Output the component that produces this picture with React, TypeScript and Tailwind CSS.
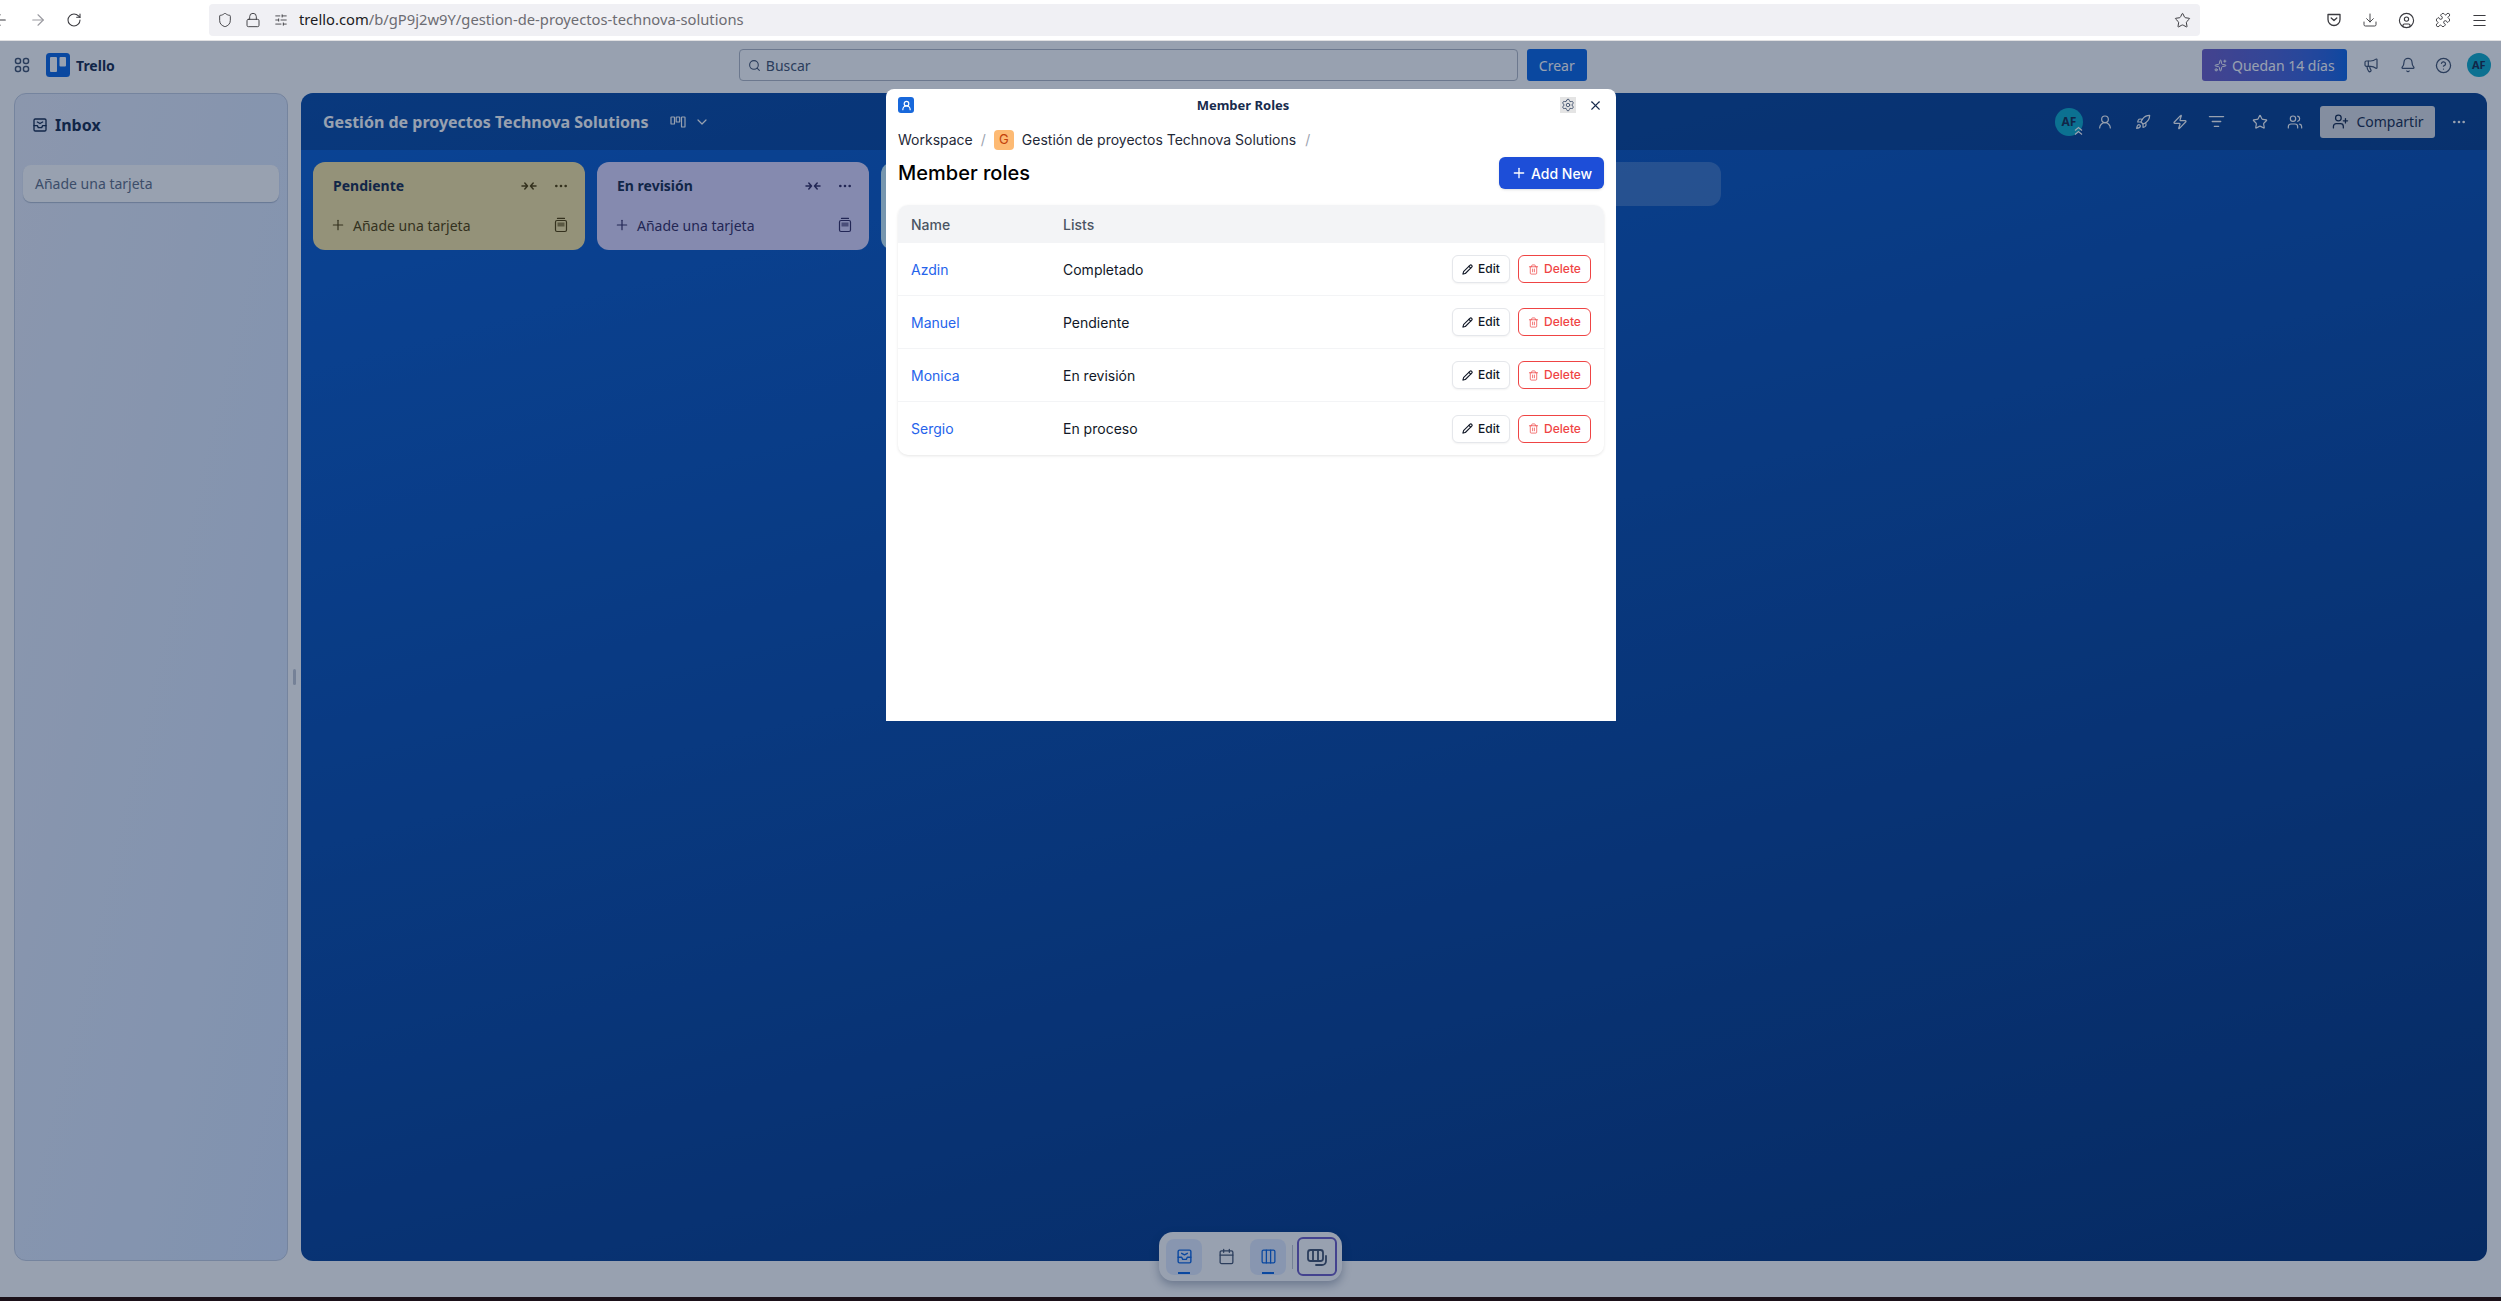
import React from 'react';
import {
  ArrowLeft, ArrowRight, RotateCw, Shield, Lock, SlidersHorizontal, Star, Download, CircleUser, Puzzle, Menu,
  Search, Sparkles, Megaphone, Bell, CircleHelp, UserRound, Rocket, Zap, ListFilter, Users, UserPlus, Ellipsis,
  Plus, Pencil, Trash2, Settings, X, Calendar, Columns3, ChevronDown,
} from 'lucide-react';

const AppsIcon = () => (
  <svg width="16" height="16" viewBox="0 0 16 16" fill="none" stroke="currentColor" strokeWidth="1.5">
    <rect x="1.5" y="1.5" width="5" height="5" rx="2" />
    <rect x="9.5" y="1.5" width="5" height="5" rx="2" />
    <rect x="1.5" y="9.5" width="5" height="5" rx="2" />
    <rect x="9.5" y="9.5" width="5" height="5" rx="2" />
  </svg>
);

const TrelloLogo = () => (
  <svg width="24" height="24" viewBox="0 0 24 24">
    <rect width="24" height="24" rx="3.5" fill="#0c66e4" />
    <rect x="4" y="4" width="7" height="15" rx="1" fill="#ffffff" />
    <rect x="13.5" y="4" width="6.5" height="9.5" rx="1" fill="#ffffff" />
  </svg>
);

const PocketIcon = () => (
  <svg width="16" height="16" viewBox="0 0 16 16" fill="none" stroke="currentColor" strokeWidth="1.3">
    <path d="M2 2.5h12v5a6 6 0 0 1-12 0z" strokeLinejoin="round" />
    <path d="M5.2 6 8 8.6 10.8 6" strokeLinecap="round" strokeLinejoin="round" />
  </svg>
);

const TrayIcon = ({ size }: { size: number }) => (
  <svg width={size} height={size} viewBox="0 0 24 24" fill="none" stroke="currentColor" strokeWidth="2" strokeLinejoin="round" strokeLinecap="round">
    <rect x="3" y="3" width="18" height="18" rx="2" />
    <path d="M3 13h5l1.5 3h5l1.5-3h5M8 7.5l4 2.2 4-2.2" />
  </svg>
);

const CollapseIcon = () => (
  <svg width="16" height="16" viewBox="0 0 16 16" fill="none" stroke="currentColor" strokeWidth="1.5" strokeLinecap="round" strokeLinejoin="round">
    <path d="M1 8h4.5M3.8 5l2.7 3-2.7 3M15 8h-4.5M12.2 5 9.5 8l2.7 3" />
  </svg>
);

const TemplateIcon = () => (
  <svg width="16" height="16" viewBox="0 0 16 16" fill="none" stroke="currentColor" strokeWidth="1.2">
    <rect x="2.5" y="3.5" width="11" height="11" rx="1.5" />
    <path d="M4.5 1.4h7" strokeLinecap="round" />
    <rect x="4.5" y="5.5" width="7" height="4" fill="currentColor" fillOpacity="0.6" stroke="none" />
  </svg>
);

const BoardViewIcon = () => (
  <svg width="16" height="16" viewBox="0 0 16 16" fill="none" stroke="currentColor" strokeWidth="1.2">
    <rect x="1" y="3" width="3.5" height="7" rx="0.6" />
    <rect x="6.2" y="3" width="3.5" height="5" rx="0.6" />
    <rect x="11.5" y="3" width="3.5" height="10" rx="0.6" />
  </svg>
);

const SwitchIcon = () => (
  <svg width="24" height="24" viewBox="0 0 24 24" fill="none" stroke="currentColor" strokeWidth="1.8" strokeLinecap="round">
    <rect x="3" y="5" width="15" height="11" rx="2.5" />
    <path d="M8 5v11M13 5v11M21 11v5a4 4 0 0 1-4 4h-6" />
  </svg>
);

const lists = [
  { name: 'Pendiente', bg: 'bg-[#f8e6a0]', fg: 'text-[#533f04]' },
  { name: 'En revisión', bg: 'bg-[#dfd8fd]', fg: 'text-[#352c63]' },
];

const roles = [
  { name: 'Azdin', list: 'Completado' },
  { name: 'Manuel', list: 'Pendiente' },
  { name: 'Monica', list: 'En revisión' },
  { name: 'Sergio', list: 'En proceso' },
];

const BrowserBar = () => (
  <div className="flex h-[41px] shrink-0 items-center border-b border-[#e0e0e2] bg-white text-[#3b3b40]">
    <div className="flex w-[209px] shrink-0 items-center">
      <ArrowLeft size={18} strokeWidth={1.5} className="ml-[-9px]" />
      <ArrowRight size={18} strokeWidth={1.5} className="ml-[20px] text-[#9a9aa0]" />
      <RotateCw size={16} strokeWidth={1.6} className="ml-[19px]" />
    </div>
    <div className="flex h-[32px] w-[1991px] shrink-0 items-center rounded-[4px] bg-[#f0f0f4] pl-[8px] pr-[9px]">
      <Shield size={16} strokeWidth={1.4} />
      <Lock size={16} strokeWidth={1.4} className="ml-[12px]" />
      <SlidersHorizontal size={14} strokeWidth={1.5} className="ml-[13px]" />
      <span className="ml-[11px] pb-[2px] text-[14.75px] leading-[20px] text-[#6c6c72]">
        <span className="text-[#1c1b22]">trello.com</span>/b/gP9j2w9Y/gestion-de-proyectos-technova-solutions
      </span>
      <Star size={17} strokeWidth={1.4} className="ml-auto" />
    </div>
    <div className="ml-[126px] flex items-center gap-[20px]">
      <PocketIcon />
      <Download size={16} strokeWidth={1.4} />
      <CircleUser size={17} strokeWidth={1.6} />
      <Puzzle size={16} strokeWidth={1.4} />
      <Menu size={17} strokeWidth={1.5} />
    </div>
  </div>
);

const TopBar = () => (
  <div className="flex h-[48px] shrink-0 items-center bg-white text-[#44546f]">
    <div className="ml-[14px] flex w-[16px] justify-center"><AppsIcon /></div>
    <div className="ml-[16px]"><TrelloLogo /></div>
    <span className="ml-[6px] text-[14px] font-bold text-[#172b4d]">Trello</span>
    <div className="ml-[624px] flex h-[32px] w-[779px] items-center rounded-[4px] border border-[#b3b9c4] pl-[8px] text-[14px] text-[#44546f]">
      <Search size={13} strokeWidth={2} />
      <span className="ml-[5px]">Buscar</span>
    </div>
    <div className="ml-[9px] flex h-[32px] w-[60px] items-center justify-center rounded-[3px] bg-[#0c66e4] text-[14px] text-white">Crear</div>
    <div className="ml-[615px] flex h-[32px] w-[145px] items-center justify-center gap-[5px] rounded-[3px] bg-gradient-to-r from-[#6e5dc6] to-[#0c66e4] text-[14px] text-white">
      <Sparkles size={13} strokeWidth={1.8} />
      <span>Quedan 14 días</span>
    </div>
    <Megaphone size={16} strokeWidth={1.8} className="ml-[16px]" />
    <Bell size={16} strokeWidth={1.8} className="ml-[21px]" />
    <CircleHelp size={17} strokeWidth={1.8} className="ml-[19px]" />
    <div className="ml-[15px] flex size-[24px] items-center justify-center rounded-full bg-[#0fadca] text-[11px] font-bold text-[#172b4d]">AF</div>
  </div>
);

const ListCard = ({ name, bg, fg }: { name: string; bg: string; fg: string }) => (
  <div className={`h-[88px] w-[272px] shrink-0 rounded-[12px] ${bg}`}>
    <div className="flex h-[47px] items-center pl-[20px] pr-[16px]">
      <span className="text-[14px] font-bold text-[#172b4d]">{name}</span>
      <span className={`ml-auto ${fg}`}><CollapseIcon /></span>
      <Ellipsis size={16} className={`ml-[16px] ${fg}`} />
    </div>
    <div className={`flex h-[32px] items-center pl-[17px] pr-[16px] text-[14px] ${fg}`}>
      <Plus size={16} strokeWidth={1.8} />
      <span className="ml-[7px]">Añade una tarjeta</span>
      <span className="ml-auto"><TemplateIcon /></span>
    </div>
  </div>
);

const Sidebar = () => (
  <div className="h-full w-[274px] shrink-0 rounded-[12px] border border-[#c3cde0] bg-gradient-to-br from-[#e9eefa] to-[#d7e6ff] px-[8px]">
    <div className="mb-[9px] flex h-[62px] items-center pl-[9px] text-[#172b4d]">
      <TrayIcon size={16} />
      <span className="ml-[7px] text-[16px] font-bold">Inbox</span>
    </div>
    <div className="flex h-[37px] items-center rounded-[8px] bg-white pl-[12px] text-[14px] text-[#626f86] shadow-[0_1px_1px_#091e4240]">
      Añade una tarjeta
    </div>
  </div>
);

const Board = () => (
  <div className="flex h-full min-w-0 flex-1 flex-col overflow-hidden rounded-[12px] bg-[linear-gradient(165deg,#0c5fd2,#05337a)]">
    <div className="flex h-[57px] shrink-0 items-center bg-black/20 pl-[22px] pr-[20px] text-white">
      <span className="text-[16px] font-bold">Gestión de proyectos Technova Solutions</span>
      <span className="ml-[22px]"><BoardViewIcon /></span>
      <ChevronDown size={16} strokeWidth={1.8} className="ml-[8px]" />
      <div className="relative ml-auto flex size-[28px] items-center justify-center rounded-full bg-[#0fadca] text-[12px] font-bold text-[#172b4d]">
        AF
        <svg width="9" height="10" viewBox="0 0 9 10" fill="none" stroke="#ffffff" strokeWidth="1.2" className="absolute bottom-0 right-0">
          <path d="M1 4.5 4.5 1.5 8 4.5M1 8.5l3.5-3 3.5 3" />
        </svg>
      </div>
      <UserRound size={16} strokeWidth={1.8} className="ml-[14px]" />
      <Rocket size={16} strokeWidth={1.8} className="ml-[22px]" />
      <Zap size={16} strokeWidth={1.8} className="ml-[21px]" />
      <ListFilter size={17} strokeWidth={1.8} className="ml-[20px]" />
      <Star size={16} strokeWidth={1.8} className="ml-[27px]" />
      <Users size={16} strokeWidth={1.8} className="ml-[19px]" />
      <div className="ml-[17px] flex h-[32px] w-[115px] items-center justify-center gap-[7px] rounded-[3px] bg-[#dcdfe4] pl-[1px] text-[14px] text-[#172b4d]">
        <UserPlus size={17} strokeWidth={1.8} />
        <span>Compartir</span>
      </div>
      <Ellipsis size={16} className="ml-[16px]" />
    </div>
    <div className="flex gap-[12px] pl-[12px] pt-[12px]">
      {lists.map((l) => <ListCard key={l.name} {...l} />)}
      {/* these two sit behind the modal, only a sliver of the first one shows */}
      <div className="h-[88px] w-[272px] shrink-0 rounded-[12px] bg-[#c6edfb]" />
      <div className="h-[88px] w-[272px] shrink-0 rounded-[12px] bg-[#baf3db]" />
      <div className="h-[44px] w-[272px] shrink-0 rounded-[12px] bg-white/20" />
    </div>
  </div>
);

const DockButton = ({ active, children }: { active?: boolean; children: React.ReactNode }) => (
  <div className={`relative flex size-[36px] items-center justify-center rounded-[8px] ${active ? 'bg-[#e4edff] text-[#0c66e4]' : 'text-[#44546f]'}`}>
    {children}
    {active && <span className="absolute bottom-[1px] h-[2px] w-[12px] bg-[#0c66e4]" />}
  </div>
);

const Dock = () => (
  <div className="absolute left-[1159px] top-[1191px] flex h-[49px] w-[183px] items-center rounded-[14px] bg-white pl-[7px] shadow-[0_4px_10px_#091e4250]">
    <DockButton active><TrayIcon size={17} /></DockButton>
    <div className="ml-[6px]"><DockButton><Calendar size={17} strokeWidth={1.8} /></DockButton></div>
    <div className="ml-[6px]"><DockButton active><Columns3 size={17} strokeWidth={1.8} /></DockButton></div>
    <div className="ml-[6px] h-[24px] w-px bg-[#c1c7d0]" />
    <div className="ml-[4px] flex h-[39px] w-[40px] items-center justify-center rounded-[6px] border-2 border-[#6e5dc6] text-[#44546f]">
      <SwitchIcon />
    </div>
  </div>
);

const RoleRow = ({ name, list }: { name: string; list: string }) => (
  <div className="flex h-[53px] items-center border-b border-[#f3f4f6] pl-[13px] pr-[13px] last:border-b-0">
    <span className="w-[152px] text-[14px] text-[#2563eb]">{name}</span>
    <span className="text-[14px] text-[#111827]">{list}</span>
    <div className="ml-auto flex items-center gap-[8px]">
      <div className="flex h-[28px] w-[58px] items-center justify-center gap-[5px] rounded-[6px] border border-[#e5e7eb] bg-white text-[12px] font-medium text-[#111827] shadow-xs">
        <Pencil size={11} strokeWidth={2.4} />
        <span>Edit</span>
      </div>
      <div className="flex h-[28px] w-[73px] items-center justify-center gap-[5px] rounded-[6px] border border-[#ef4444] bg-white text-[12px] font-medium text-[#ef4444]">
        <Trash2 size={11} strokeWidth={1.6} />
        <span>Delete</span>
      </div>
    </div>
  </div>
);

const MemberRolesModal = () => (
  <div className="absolute left-[886px] top-[48px] h-[632px] w-[730px] rounded-t-[8px] bg-white font-['Inter',sans-serif]">
    <div className="relative flex h-[33px] items-center justify-center pr-[16px]">
      <div className="absolute left-[12px] top-[8px] flex size-[16px] items-center justify-center rounded-[3px] bg-[#1868db] text-white">
        <UserRound size={11} strokeWidth={2.6} />
      </div>
      <span className="font-['Noto_Sans',sans-serif] text-[13px] font-bold text-[#172b4d]">Member Roles</span>
      <div className="absolute right-[40px] top-[8px] flex size-[16px] items-center justify-center bg-[#e4e4e4] text-[#44546f]">
        <Settings size={14} strokeWidth={1.6} />
      </div>
      <X size={15} strokeWidth={1.8} className="absolute right-[13px] top-[9px] text-[#172b4d]" />
    </div>
    <div className="mt-[7px] flex h-[20px] items-center pl-[12px] pt-px text-[14px] text-[#1f2937]">
      <span>Workspace</span>
      <span className="ml-[8px] text-[#9ca3af]">/</span>
      <span className="ml-[8px] flex size-[20px] items-center justify-center rounded-[4px] bg-[#fdba74] text-[13px] text-[#c2410c]">G</span>
      <span className="ml-[8px]">Gestión de proyectos Technova Solutions</span>
      <span className="ml-[9px] text-[#9ca3af]">/</span>
    </div>
    <div className="mt-[8px] flex h-[32px] items-center justify-between pl-[12px] pr-[12px]">
      <h1 className="text-[20px] font-medium text-black">Member roles</h1>
      <div className="flex h-[32px] w-[105px] items-center justify-center gap-[4px] rounded-[6px] bg-[#1d4ed8] text-[14px] font-medium text-white shadow-sm">
        <Plus size={16} strokeWidth={2} />
        <span>Add New</span>
      </div>
    </div>
    <div className="mx-[12px] mt-[16px] rounded-[10px] bg-white shadow-[0_1px_3px_#0000001a]">
      <div className="flex h-[38px] items-center rounded-t-[10px] bg-[#f3f4f6] pl-[13px] text-[14px] font-medium text-[#4b5563]">
        <span className="w-[152px]">Name</span>
        <span>Lists</span>
      </div>
      {roles.map((r) => <RoleRow key={r.name} {...r} />)}
    </div>
  </div>
);

export default function App() {
  return (
    <div className="flex h-screen w-full flex-col overflow-hidden bg-[#1b1119] font-['Noto_Sans',sans-serif]">
      <BrowserBar />
      <div className="relative flex h-[1256px] shrink-0 flex-col overflow-hidden bg-white">
        <TopBar />
        <div className="mt-[4px] flex h-[1168px] pl-[14px] pr-[14px]">
          <Sidebar />
          <div className="flex w-[13px] shrink-0 items-center justify-center">
            <div className="h-[16px] w-[3px] rounded-full bg-[#c3c9d4]" />
          </div>
          <Board />
        </div>
        <Dock />
        <div className="absolute inset-0 bg-[#091e426b]" />
        <MemberRolesModal />
      </div>
    </div>
  );
}
